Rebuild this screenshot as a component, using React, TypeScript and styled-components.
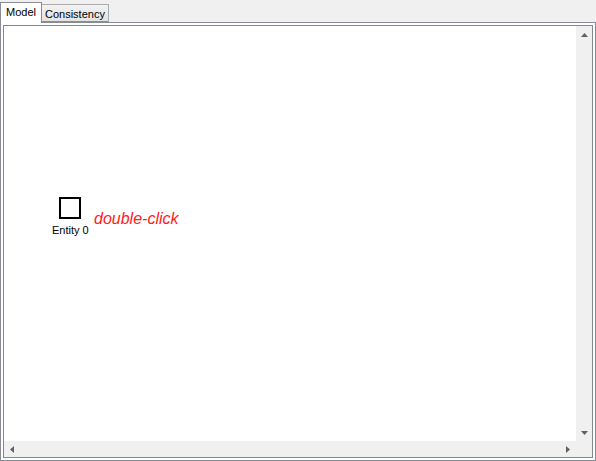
import React from "react";
import styled, { createGlobalStyle } from "styled-components";

const Global = createGlobalStyle`
  html, body { margin: 0; padding: 0; background: #f0f0f0; }
  body { font-family: "Liberation Sans", Arial, sans-serif; }
  #root { width: 596px; height: 461px; }
`;

const Window = styled.div`
  width: 596px;
  height: 461px;
  display: flex;
  flex-direction: column;
  background: #f0f0f0;
  box-sizing: border-box;
`;

const TabStrip = styled.div`
  display: flex;
  align-items: flex-end;
  height: 22px;
  position: relative;
  z-index: 1;
`;

const Tab = styled.div<{ $active?: boolean }>`
  box-sizing: border-box;
  font-size: 11px;
  color: #000;
  display: flex;
  align-items: center;
  border: 1px solid ${(p) => (p.$active ? "#898c95" : "#acacac")};
  border-bottom: ${(p) => (p.$active ? "none" : "1px solid #898c95")};
  background: ${(p) =>
    p.$active ? "#ffffff" : "linear-gradient(#f2f2f2, #e3e3e3)"};
  height: ${(p) => (p.$active ? "21px" : "18px")};
  padding: ${(p) => (p.$active ? "0 5px 2px 5px" : "1px 3px 0 3px")};
  margin-bottom: ${(p) => (p.$active ? "-1px" : "0")};
  border-left: ${(p) => (p.$active ? "1px solid #898c95" : "none")};
`;

const Panel = styled.div`
  flex: 1;
  box-sizing: border-box;
  border: 1px solid #898c95;
  background: #ffffff;
  padding: 2px;
  display: flex;
`;

const Canvas = styled.div`
  flex: 1;
  box-sizing: border-box;
  border: 1px solid #828790;
  display: grid;
  grid-template-columns: 1fr 16px;
  grid-template-rows: 1fr 16px;
  background: #ffffff;
`;

const Drawing = styled.div`
  position: relative;
  background: #ffffff;
  overflow: hidden;
`;

const VScroll = styled.div`
  background: #f0f0f0;
  display: flex;
  flex-direction: column;
  justify-content: space-between;
  align-items: center;
  padding: 7px 0 6px 0;
  box-sizing: border-box;
`;

const HScroll = styled.div`
  background: #f0f0f0;
  display: flex;
  justify-content: space-between;
  align-items: center;
  padding: 0 6px 0 6px;
  box-sizing: border-box;
`;

const Corner = styled.div`
  background: #f0f0f0;
`;

const Arrow = styled.svg`
  display: block;
`;

const Node = styled.div`
  position: absolute;
  left: 48px;
  top: 171px;
  display: flex;
  flex-direction: column;
  align-items: center;
`;

const Box = styled.div`
  width: 22px;
  height: 22px;
  box-sizing: border-box;
  border: 2px solid #000;
  background: #fff;
`;

const NodeLabel = styled.div`
  font-size: 11px;
  color: #000;
  margin-top: 5px;
  white-space: nowrap;
`;

const Hint = styled.div`
  position: absolute;
  left: 90px;
  top: 184px;
  font-size: 16px;
  font-style: italic;
  color: #ff2020;
  white-space: nowrap;
`;

export default function App() {
  return (
    <>
      <Global />
      <Window>
        <TabStrip>
          <Tab $active>Model</Tab>
          <Tab>Consistency</Tab>
        </TabStrip>
        <Panel>
          <Canvas>
            <Drawing>
              <Node>
                <Box />
                <NodeLabel>Entity 0</NodeLabel>
              </Node>
              <Hint>double-click</Hint>
            </Drawing>
            <VScroll>
              <Arrow width="7" height="4" viewBox="0 0 7 4">
                <polygon points="3.5,0 7,4 0,4" fill="#606060" />
              </Arrow>
              <Arrow width="7" height="4" viewBox="0 0 7 4">
                <polygon points="0,0 7,0 3.5,4" fill="#606060" />
              </Arrow>
            </VScroll>
            <HScroll>
              <Arrow width="4" height="7" viewBox="0 0 4 7">
                <polygon points="0,3.5 4,0 4,7" fill="#606060" />
              </Arrow>
              <Arrow width="4" height="7" viewBox="0 0 4 7">
                <polygon points="0,0 4,3.5 0,7" fill="#606060" />
              </Arrow>
            </HScroll>
            <Corner />
          </Canvas>
        </Panel>
      </Window>
    </>
  );
}
